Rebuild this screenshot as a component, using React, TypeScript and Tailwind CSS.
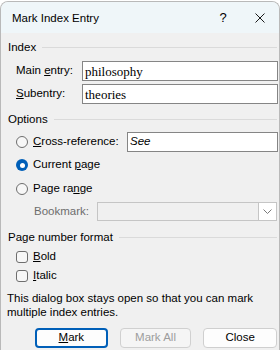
import React from "react";

const ui = "font-['Segoe_UI','Liberation_Sans',sans-serif]";

const SectionHeader: React.FC<{ title: string }> = ({ title }) => (
  <div className="flex items-center h-[16px] pl-[7px] pr-[2px]">
    <span className="text-[11.5px] leading-[16px] text-black whitespace-nowrap">{title}</span>
    <div className="flex-1 h-px bg-[#dadada] ml-[6px]" />
  </div>
);

const Radio: React.FC<{ checked?: boolean }> = ({ checked }) =>
  checked ? (
    <span className="w-[12px] h-[12px] rounded-full bg-[#005fb8] flex items-center justify-center shrink-0">
      <span className="w-[5px] h-[5px] rounded-full bg-white" />
    </span>
  ) : (
    <span className="w-[12px] h-[12px] rounded-full border border-[#6e6e6e] bg-[#f7f7f7] shrink-0" />
  );

const Checkbox: React.FC = () => (
  <span className="w-[12px] h-[12px] rounded-[3px] border border-[#6e6e6e] bg-[#f7f7f7] shrink-0" />
);

const TextBox: React.FC<{ value?: string; className?: string; italic?: boolean }> = ({
  value,
  className = "",
  italic,
}) => (
  <div
    className={`h-[20px] border border-[#858585] bg-white flex items-center px-[2px] ${className}`}
  >
    {italic ? (
      <span className="text-[11.5px] italic text-black">{value}</span>
    ) : (
      <span className="font-['Liberation_Serif',serif] text-[13px] leading-none text-black">
        {value}
      </span>
    )}
  </div>
);

export default function App() {
  return (
    <div className={`w-[280px] h-[350px] overflow-hidden bg-white ${ui}`}>
      <div className="w-[280px] h-[350px] flex flex-col border-t border-l border-r border-[#b9b9b9] rounded-t-[8px] mt-[1px] overflow-hidden bg-[#f0f0f0]">
        {/* title bar */}
        <div className="h-[31px] bg-[#eff6f9] flex items-center pl-[11px] shrink-0">
          <span className="text-[11.5px] text-black flex-1 pt-[2px]">Mark Index Entry</span>
          <span className="text-[13px] text-black w-[20px] text-center mr-[22px]">?</span>
          <svg width="10" height="10" viewBox="0 0 10 10" className="mr-[14px]">
            <path d="M0.5 0.5 L9.5 9.5 M9.5 0.5 L0.5 9.5" stroke="#1a1a1a" strokeWidth="1" />
          </svg>
        </div>

        <div className="flex flex-col pt-[6px] text-[11.5px] text-black">
          <SectionHeader title="Index" />
          <div className="flex items-center mt-[6px] pl-[15px] pr-[1px]">
            <span className="w-[66px] whitespace-nowrap">
              Main <span className="underline">e</span>ntry:
            </span>
            <TextBox value="philosophy" className="flex-1" />
          </div>
          <div className="flex items-center mt-[3px] pl-[15px] pr-[1px]">
            <span className="w-[66px]">
              <span className="underline">S</span>ubentry:
            </span>
            <TextBox value="theories" className="flex-1" />
          </div>

          <div className="mt-[7px]">
            <SectionHeader title="Options" />
          </div>
          <div className="flex items-center mt-[5px] h-[19px] pl-[15px] pr-[1px]">
            <Radio />
            <span className="ml-[5px] w-[94px] whitespace-nowrap">
              <span className="underline">C</span>ross-reference:
            </span>
            <TextBox value="See" italic className="flex-1 h-[18px]" />
          </div>
          <div className="flex items-center h-[20px] mt-[4px] pl-[15px]">
            <Radio checked />
            <span className="ml-[5px]">
              Current <span className="underline">p</span>age
            </span>
          </div>
          <div className="flex items-center h-[20px] mt-[4px] pl-[15px]">
            <Radio />
            <span className="ml-[5px]">
              Page ra<span className="underline">n</span>ge
            </span>
          </div>
          <div className="flex items-center h-[19px] mt-[3px] pl-[33px] pr-[2px]">
            <span className="w-[63px] text-[#6d6d6d]">Bookmark:</span>
            <div className="flex-1 h-[19px] border border-[#c5c5c5] bg-[#f0f0f0] flex justify-end">
              <div className="w-[18px] h-full bg-white border-l border-[#c5c5c5] flex items-center justify-center">
                <svg width="9" height="5" viewBox="0 0 9 5">
                  <path d="M0.5 0.5 L4.5 4.5 L8.5 0.5" stroke="#7a7a7a" fill="none" strokeWidth="1" />
                </svg>
              </div>
            </div>
          </div>

          <div className="mt-[8px]">
            <SectionHeader title="Page number format" />
          </div>
          <div className="flex items-center h-[19px] mt-[2px] pl-[15px]">
            <Checkbox />
            <span className="ml-[5px]">
              <span className="underline">B</span>old
            </span>
          </div>
          <div className="flex items-center h-[19px] pl-[15px]">
            <Checkbox />
            <span className="ml-[5px]">
              <span className="underline">I</span>talic
            </span>
          </div>

          <p className="mt-[6px] pl-[6px] pr-[10px] leading-[14px]">
            This dialog box stays open so that you can mark multiple index entries.
          </p>

          <div className="flex mt-[9px] pl-[34px] pr-[2px] gap-[12px]">
            <button className="w-[73px] h-[20px] rounded-[4px] border-2 border-[#005fb8] bg-[#fdfdfd] text-[11.5px] leading-none">
              <span className="underline">M</span>ark
            </button>
            <button className="w-[72px] h-[20px] rounded-[4px] border border-[#d0d0d0] bg-[#f5f5f5] text-[11.5px] leading-none text-[#9d9d9d]">
              Mark All
            </button>
            <button className="w-[74px] h-[20px] rounded-[4px] border border-[#cfcfcf] bg-[#fdfdfd] text-[11.5px] leading-none">
              Close
            </button>
          </div>
        </div>
      </div>
    </div>
  );
}
